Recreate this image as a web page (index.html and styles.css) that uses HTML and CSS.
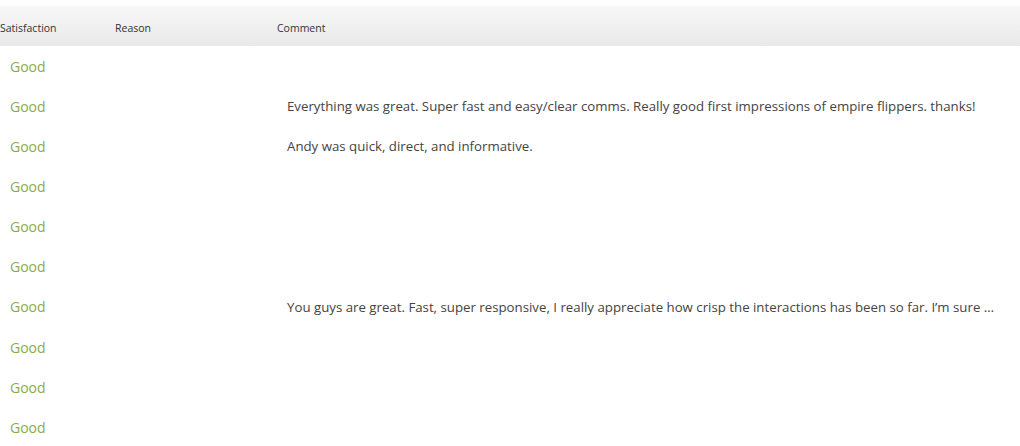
FILE: index.html
```html
<!DOCTYPE html>
<html>
<head>
<meta charset="utf-8">
<link rel="stylesheet" href="styles.css">
</head>
<body>
<div class="grid">
  <div class="head">
    <div class="hcell">Satisfaction</div>
    <div class="hcell">Reason</div>
    <div class="hcell">Comment</div>
  </div>
  <div class="row"><div class="sat">Good</div><div class="reason"></div><div class="comment"></div></div>
  <div class="row"><div class="sat">Good</div><div class="reason"></div><div class="comment">Everything was great. Super fast and easy/clear comms. Really good first impressions of empire flippers. thanks!</div></div>
  <div class="row"><div class="sat">Good</div><div class="reason"></div><div class="comment">Andy was quick, direct, and informative.</div></div>
  <div class="row"><div class="sat">Good</div><div class="reason"></div><div class="comment"></div></div>
  <div class="row"><div class="sat">Good</div><div class="reason"></div><div class="comment"></div></div>
  <div class="row"><div class="sat">Good</div><div class="reason"></div><div class="comment"></div></div>
  <div class="row"><div class="sat">Good</div><div class="reason"></div><div class="comment">You guys are great. Fast, super responsive, I really appreciate how crisp the interactions has been so far. I’m sure …</div></div>
  <div class="row"><div class="sat">Good</div><div class="reason"></div><div class="comment"></div></div>
  <div class="row"><div class="sat">Good</div><div class="reason"></div><div class="comment"></div></div>
  <div class="row"><div class="sat">Good</div><div class="reason"></div><div class="comment"></div></div>
</div>
</body>
</html>
```
FILE: styles.css
```css
html, body {
  margin: 0;
  padding: 0;
  background: #ffffff;
  overflow: hidden;
}
body {
  font-family: "Open Sans", "Noto Sans", sans-serif;
  padding-top: 6px;
}
.grid {
  display: flex;
  flex-direction: column;
}
.head {
  display: grid;
  grid-template-columns: 115px 162px 1fr;
  height: 40px;
  align-items: center;
  background: linear-gradient(#f7f7f7, #e9e9e9);
}
.hcell {
  font-size: 10.5px;
  color: #333333;
  padding-top: 3px;
}
.row {
  display: grid;
  grid-template-columns: 115px 162px 1fr;
  height: 40.15px;
  align-items: center;
}
.sat {
  padding-left: 10px;
  font-size: 14px;
  color: #8aab48;
}
.comment {
  padding-left: 10px;
  font-size: 13.25px;
  color: #444444;
  white-space: nowrap;
  overflow: hidden;
}
```
